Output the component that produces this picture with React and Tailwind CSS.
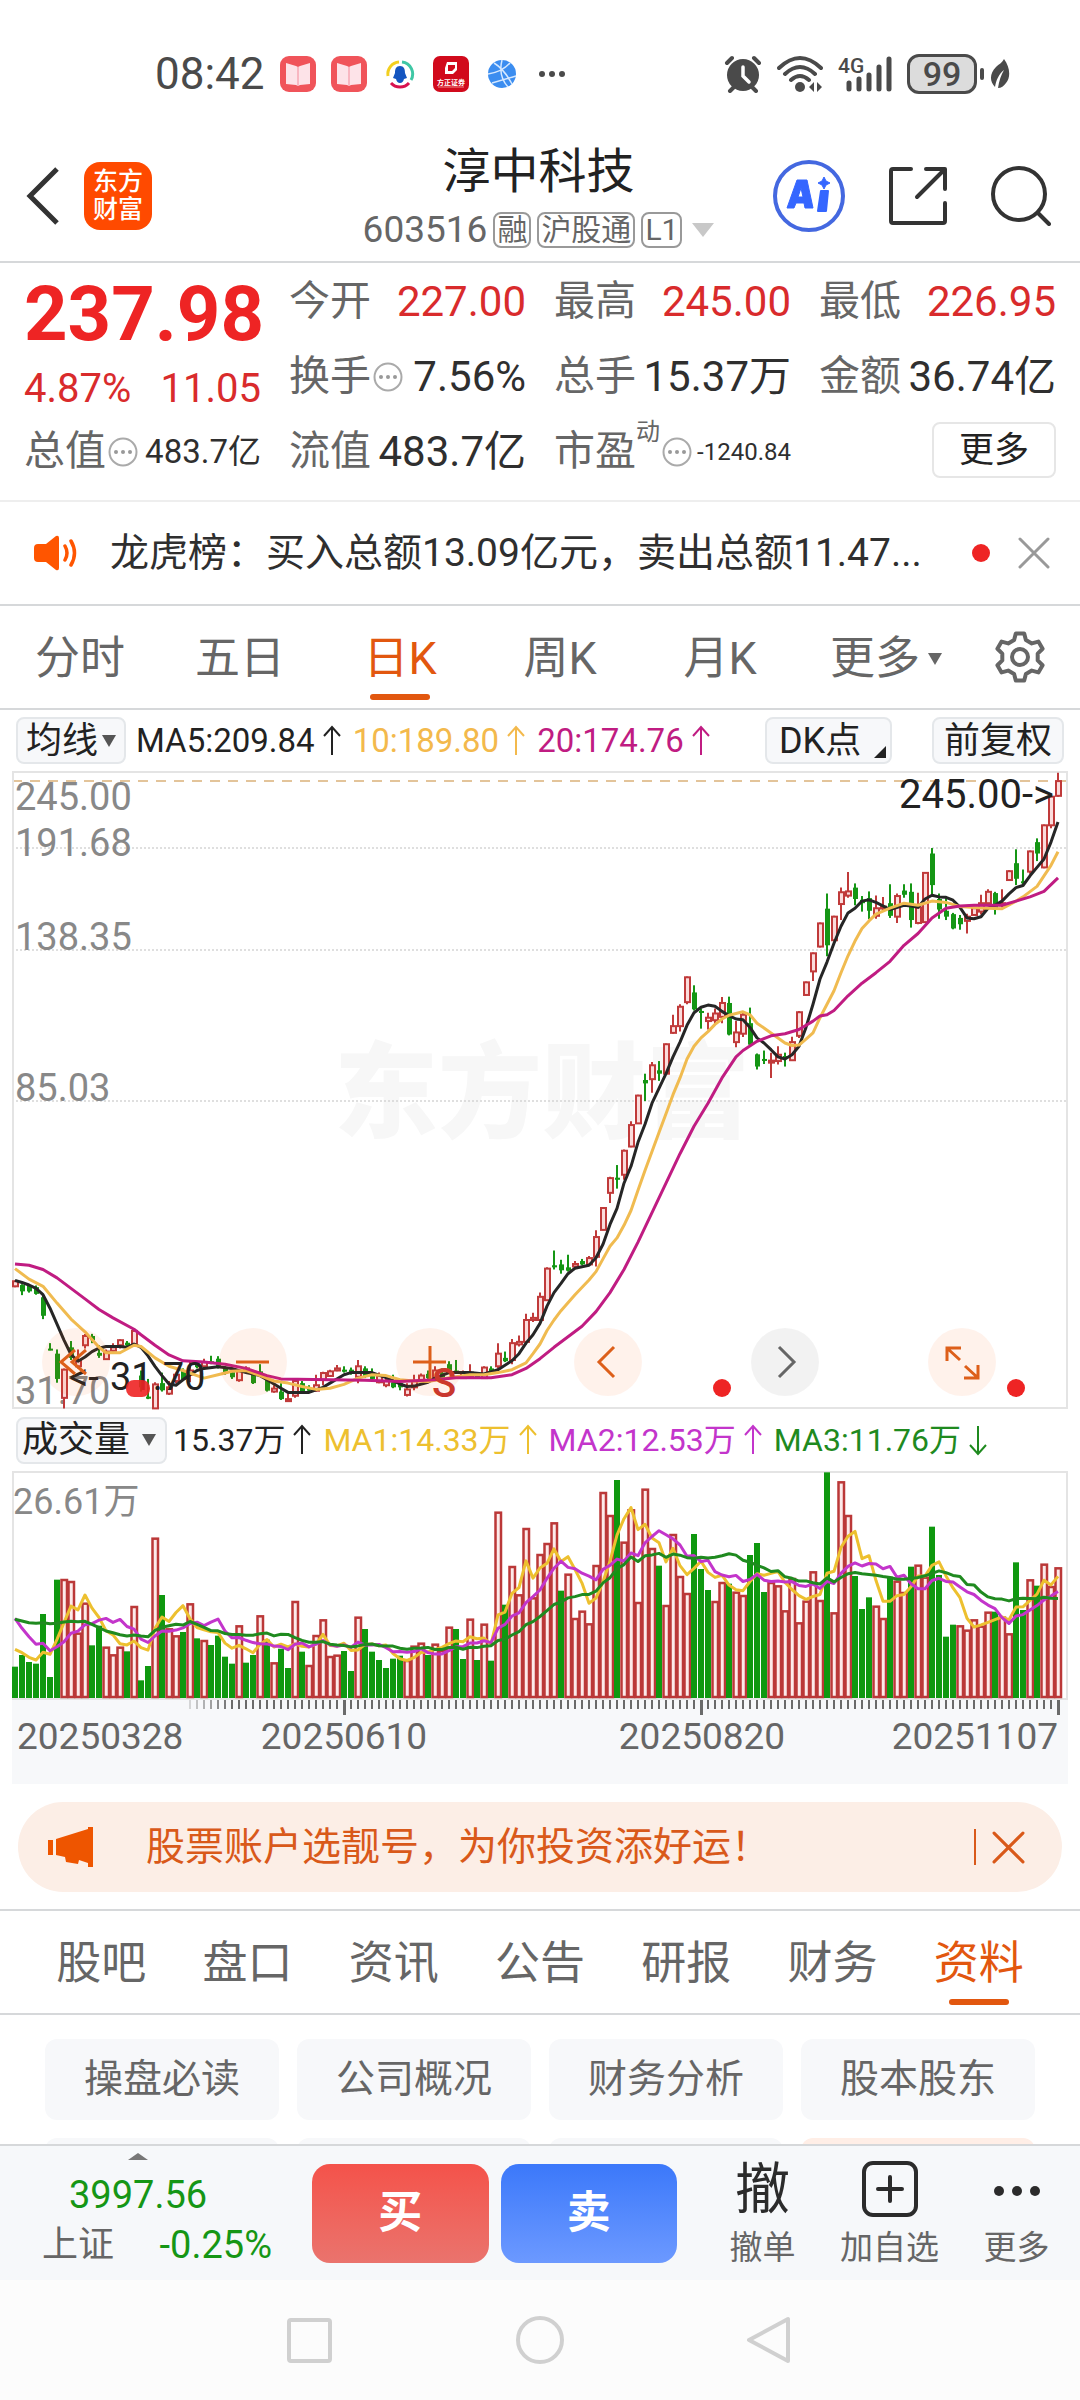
import { useState } from 'react'

const FONT = "font-['Roboto','Noto_Sans_CJK_SC',sans-serif]"

// One entry per trading day: top edge of the bar, negative = falling day
const VOLUME = [
  -620, -585, -606, -611, -462, -651, -359, 357, 363, 518, 428, -556, -497, 560, 583,
  560, -574, 438, -661, -618, 233, -405, 505, 526, -516, 430, -535, 540, -555, -527,
  -590, -611, 496, -608, -585, 466, -539, 607, -566, -624, 423, -575, 615, 525, 478,
  588, 584, -573, -633, 470, -507, -575, -600, -624, -596, -587, 600, 557, 548, -585,
  551, 570, 500, -507, -597, 476, -600, 491, -602, 155, -434, 318, 403, 204, 412,
  282, 249, 187, -392, 341, 474, 452, 490, 315, 96, 165, -60, 245, 148, 426,
  86, 264, -317, 435, 222, 348, 399, -222, -327, -390, 423, 366, -371, 395, 405,
  -285, -249, -396, 366, 376, 451, 354, 487, 422, 334, 420, -37, 457, 64, 165,
  -348, -447, -412, 437, 474, -350, 362, 396, -320, 314, 350, -200, -345, -530, -494,
  496, 509, 478, 497, 455, -455, 470, 520, -307, -450, 358, -377, 311, 378, 322,
]

// high, body top, body bottom, low; negative high = falling day
const CANDLES = [
  [1236, 1238, 1250, 1252], [-1245, 1247, 1262, 1271], [-1245, 1248, 1262, 1265], [-1248, 1252, 1268, 1270], [-1270, 1276, 1320, 1328],
  [-1385, 1398, 1402, 1402], [-1400, 1410, 1470, 1479], [1445, 1448, 1515, 1540], [-1380, 1395, 1420, 1425], [1400, 1425, 1440, 1445],
  [1363, 1368, 1390, 1398], [-1363, 1368, 1378, 1385], [-1390, 1408, 1415, 1420], [1400, 1405, 1423, 1425], [1385, 1395, 1403, 1405],
  [1376, 1378, 1390, 1398], [-1380, 1384, 1390, 1393], [1350, 1356, 1388, 1390], [-1450, 1462, 1490, 1500], [-1470, 1512, 1517, 1518],
  [1478, 1483, 1540, 1540], [-1455, 1480, 1497, 1500], [1475, 1490, 1505, 1508], [1455, 1460, 1475, 1480], [-1445, 1450, 1472, 1475],
  [1430, 1450, 1460, 1478], [-1430, 1434, 1442, 1445], [1422, 1430, 1440, 1445], [-1415, 1428, 1432, 1435], [-1416, 1422, 1440, 1445],
  [-1440, 1444, 1456, 1460], [-1450, 1454, 1466, 1470], [1450, 1452, 1473, 1477], [1440, 1445, 1452, 1455], [-1450, 1458, 1480, 1482],
  [-1435, 1452, 1458, 1462], [-1465, 1472, 1498, 1500], [1485, 1493, 1500, 1503], [-1480, 1500, 1518, 1520], [1505, 1518, 1522, 1525],
  [1470, 1475, 1510, 1515], [-1475, 1480, 1500, 1502], [-1485, 1492, 1498, 1500], [1460, 1485, 1498, 1500], [1453, 1456, 1472, 1485],
  [1448, 1452, 1463, 1465], [1437, 1445, 1450, 1452], [-1440, 1448, 1453, 1455], [-1443, 1448, 1458, 1460], [1425, 1440, 1465, 1480],
  [-1440, 1445, 1465, 1468], [-1445, 1455, 1470, 1472], [1455, 1462, 1478, 1480], [1465, 1475, 1485, 1490], [-1460, 1478, 1490, 1492],
  [-1475, 1480, 1490, 1497], [1480, 1495, 1508, 1512], [1460, 1475, 1490, 1497], [1457, 1462, 1473, 1475], [-1450, 1458, 1468, 1470],
  [1440, 1450, 1468, 1470], [-1445, 1455, 1468, 1470], [-1428, 1435, 1452, 1455], [-1425, 1450, 1453, 1455], [1450, 1455, 1468, 1470],
  [1435, 1455, 1463, 1465], [-1455, 1460, 1468, 1470], [1440, 1443, 1468, 1470], [-1440, 1445, 1456, 1458], [1385, 1410, 1440, 1445],
  [-1405, 1420, 1428, 1430], [1375, 1385, 1425, 1435], [1367, 1382, 1388, 1393], [1315, 1330, 1382, 1388], [1313, 1325, 1330, 1335],
  [1265, 1275, 1330, 1332], [1205, 1208, 1283, 1284], [-1165, 1200, 1205, 1210], [-1187, 1198, 1212, 1220], [-1175, 1205, 1213, 1215],
  [1190, 1197, 1203, 1205], [-1185, 1190, 1198, 1200], [1178, 1183, 1198, 1200], [1117, 1133, 1180, 1203], [1062, 1064, 1116, 1117],
  [990, 993, 1028, 1052], [-962, 992, 997, 1018], [925, 928, 985, 997], [858, 867, 918, 920], [795, 797, 863, 864],
  [-745, 760, 768, 810], [717, 725, 758, 790], [-715, 737, 745, 762], [673, 675, 745, 746], [605, 632, 648, 650],
  [580, 586, 632, 645], [514, 516, 575, 580], [-535, 552, 592, 595], [-590, 596, 600, 638], [600, 612, 620, 640],
  [590, 602, 618, 628], [563, 577, 610, 625], [-562, 577, 652, 654], [620, 647, 670, 682], [600, 605, 650, 658],
  [-588, 625, 676, 678], [-697, 699, 728, 735], [-690, 710, 714, 722], [695, 714, 718, 755], [680, 700, 715, 723],
  [-695, 703, 708, 728], [657, 670, 713, 715], [596, 599, 655, 660], [526, 528, 558, 559], [457, 459, 502, 525],
  [386, 388, 443, 445], [-317, 353, 440, 466], [370, 372, 428, 430], [303, 314, 342, 380], [266, 312, 322, 327],
  [-293, 303, 330, 345], [-323, 332, 340, 360], [-312, 328, 358, 378], [322, 352, 370, 377], [325, 348, 352, 358],
  [-295, 340, 370, 375], [317, 323, 372, 387], [-295, 310, 320, 327], [-293, 313, 380, 398], [315, 350, 387, 390],
  [266, 268, 385, 387], [-209, 222, 297, 325], [-317, 330, 355, 377], [-325, 358, 372, 380], [-363, 366, 400, 402],
  [-368, 375, 390, 403], [365, 372, 382, 412], [345, 352, 368, 370], [320, 340, 360, 367], [307, 313, 340, 345],
  [-313, 316, 355, 367], [307, 340, 345, 350], [262, 264, 285, 286], [-212, 245, 282, 297], [-260, 288, 292, 297],
  [215, 217, 265, 270], [-186, 195, 222, 240], [153, 155, 255, 257], [85, 87, 155, 162], [30, 50, 85, 87],
]

// [day, value] pairs
const MA5 = [
  [0, 1236], [1, 1241], [2, 1247], [3, 1255], [4, 1270], [5, 1302], [6, 1340], [7, 1378], [8, 1412], [9, 1428], [10, 1418], [11, 1405],
  [12, 1397], [13, 1393], [15, 1393], [16, 1395], [17, 1387], [18, 1395], [19, 1415], [20, 1440], [21, 1462], [22, 1482], [23, 1485],
  [24, 1472], [25, 1460], [26, 1450], [27, 1445], [29, 1441], [31, 1445], [33, 1455], [35, 1462], [36, 1472], [38, 1492], [39, 1502],
  [42, 1502], [44, 1490], [45, 1480], [47, 1460], [48, 1455], [51, 1455], [53, 1467], [55, 1482], [56, 1488], [57, 1487], [59, 1478],
  [60, 1468], [62, 1455], [65, 1455], [67, 1458], [69, 1448], [71, 1427], [72, 1410], [73, 1385], [74, 1365], [75, 1338], [76, 1297],
  [77, 1265], [78, 1243], [79, 1220], [80, 1207], [82, 1200], [83, 1182], [84, 1150], [85, 1103], [86, 1065], [87, 1005], [88, 965],
  [89, 908], [90, 865], [91, 815], [92, 780], [93, 745], [94, 705], [95, 670], [96, 630], [97, 600], [98, 587], [99, 582], [100, 585],
  [101, 597], [102, 607], [103, 615], [104, 617], [105, 635], [106, 660], [107, 672], [108, 688], [109, 705], [110, 710], [111, 700],
  [112, 680], [113, 635], [114, 580], [115, 520], [116, 480], [117, 435], [118, 395], [119, 363], [120, 352], [121, 335], [122, 332],
  [123, 338], [125, 355], [127, 345], [128, 347], [129, 350], [130, 330], [131, 321], [132, 325], [133, 326], [134, 333], [135, 350],
  [136, 375], [137, 377], [138, 372], [139, 352], [140, 345], [141, 335], [142, 318], [143, 303], [144, 298], [145, 275], [146, 255],
  [147, 235], [148, 195], [149, 147],
]
const MA10 = [
  [0, 1208], [2, 1233], [4, 1250], [6, 1290], [8, 1328], [10, 1358], [12, 1395], [13, 1408], [15, 1408], [17, 1390], [18, 1393],
  [20, 1420], [22, 1440], [24, 1450], [26, 1462], [27, 1468], [29, 1460], [31, 1452], [33, 1450], [35, 1462], [37, 1475], [39, 1480],
  [41, 1488], [43, 1495], [45, 1492], [47, 1483], [49, 1468], [51, 1460], [53, 1462], [55, 1472], [57, 1475], [59, 1476], [61, 1470],
  [63, 1465], [65, 1460], [67, 1460], [69, 1455], [71, 1448], [73, 1432], [74, 1410], [75, 1387], [76, 1355], [77, 1330], [78, 1308],
  [80, 1270], [82, 1235], [83, 1215], [84, 1185], [85, 1155], [86, 1135], [87, 1105], [88, 1070], [89, 1022], [90, 975], [91, 930],
  [92, 885], [93, 840], [94, 795], [95, 755], [96, 710], [97, 680], [98, 660], [99, 645], [100, 628], [101, 615], [102, 606],
  [104, 598], [105, 605], [106, 625], [108, 648], [110, 672], [111, 678], [112, 677], [113, 663], [114, 648], [115, 612], [116, 580],
  [117, 548], [118, 505], [119, 465], [120, 430], [121, 400], [122, 382], [123, 366], [125, 352], [127, 340], [129, 345], [131, 335],
  [133, 338], [135, 348], [137, 350], [139, 352], [141, 353], [143, 335], [144, 325], [146, 300], [147, 275], [148, 250], [149, 218],
]
const MA20 = [
  [0, 1197], [2, 1200], [4, 1210], [6, 1230], [8, 1255], [10, 1280], [12, 1305], [14, 1325], [17, 1352], [18, 1365], [20, 1390],
  [22, 1413], [24, 1427], [27, 1430], [30, 1435], [33, 1445], [36, 1462], [38, 1470], [45, 1472], [50, 1473], [55, 1476], [60, 1472],
  [63, 1467], [68, 1467], [71, 1460], [73, 1445], [75, 1422], [77, 1395], [79, 1370], [81, 1345], [83, 1310], [85, 1265], [87, 1210],
  [89, 1145], [91, 1075], [93, 1005], [95, 935], [97, 870], [99, 815], [101, 755], [103, 705], [104, 690], [106, 668], [108, 655],
  [110, 650], [112, 640], [114, 620], [115, 608], [116, 605], [117, 595], [119, 560], [121, 530], [123, 505], [125, 478], [127, 440],
  [129, 412], [131, 375], [133, 352], [135, 347], [137, 345], [141, 345], [143, 335], [145, 325], [147, 312], [149, 280],
]

const dayX = i => 3 + i * 7
const priceY = v => (v - 26) * 0.421
const volY = v => (v - 36) / 3 + 1

const toPoints = (pairs, y) => pairs.map(([i, v]) => `${dayX(i)},${y(v).toFixed(1)}`).join(' ')

// Moving average of the volume; seed holds the days before the window is full
function average(size, seed) {
  return VOLUME.map((_, i) => {
    if (i < seed.length) return [i, seed[i]]
    const win = VOLUME.slice(i - size + 1, i + 1)
    return [i, win.reduce((sum, v) => sum + Math.abs(v), 0) / size]
  })
}

const VOL_MA = [
  { color: '#edc02f', data: average(5, [568, 578, 592, 600]) },
  { color: '#c335cb', data: average(10, [475, 505, 530, 553, 550, 572, 560, 545, 520]) },
  { color: '#1f8a1f', data: average(20, [478, 483, 488, 490, 488, 491, 490, 486, 484, 485, 484, 493, 503, 513, 518, 524, 528, 525, 528]) },
]

function Caret({ className = '', up = false }) {
  return (
    <svg viewBox="0 0 14 12" preserveAspectRatio="none" className={`inline-block shrink-0 ${className}`} fill="currentColor" aria-hidden="true">
      <path d={up ? 'M0 12h14L7 0z' : 'M0 0h14L7 12z'} />
    </svg>
  )
}

function Arrow({ down = false }) {
  return (
    <svg width="18" height="32" viewBox="0 0 18 32" fill="none" stroke="currentColor" strokeWidth="2" className="ml-2 shrink-0" aria-hidden="true">
      <path d={down ? 'M9 2v28M1 21l8 9 8-9' : 'M9 30V2M1 11l8-9 8 9'} />
    </svg>
  )
}

function Close({ className = '' }) {
  return (
    <svg viewBox="0 0 32 32" className={className} fill="none" stroke="currentColor" strokeWidth="3" strokeLinecap="round" aria-hidden="true">
      <path d="M2 2l28 28M30 2L2 30" />
    </svg>
  )
}

function Hint() {
  return (
    <svg width="30" height="30" viewBox="0 0 30 30" className="mx-[2px] shrink-0" aria-hidden="true">
      <circle cx="15" cy="15" r="13.5" fill="none" stroke="#aaa" strokeWidth="2" />
      <g fill="#999">
        <circle cx="8" cy="15" r="2" />
        <circle cx="15" cy="15" r="2" />
        <circle cx="22" cy="15" r="2" />
      </g>
    </svg>
  )
}

function BookIcon() {
  return (
    <svg width="36" height="36" viewBox="0 0 36 36">
      <rect width="36" height="36" rx="9" fill="#f0545a" />
      <path d="M6 7l10 3q2 1 2 1q0 0 2-1l10-3v21l-10 1-2 1-2-1-10-1z" fill="#fde3e8" />
      <path d="M18 11v19" stroke="#f6a9b4" strokeWidth="1.5" />
    </svg>
  )
}

function StatusBar() {
  return (
    <div className="flex h-[130px] shrink-0 items-center justify-between pt-[18px] pr-[70px] pl-[155px] text-[#4a4a4a]">
      <div className="flex items-center gap-[15px]">
        <span className="text-[44px] leading-none">08:42</span>
        <BookIcon />
        <BookIcon />
        <svg width="36" height="36" viewBox="0 0 36 36" fill="none" strokeWidth="3">
          <path d="M6 20A12 12 0 0 1 17 6" stroke="#f2cf1f" />
          <path d="M20 6a12 12 0 0 1 9 18" stroke="#3fc7a5" />
          <path d="M9 27a12 12 0 0 0 18 0" stroke="#d8124f" />
          <path d="M18 10c-4 0-5 3-5 7l-2 5 3 1q1 4 4 4t4-4l3-1-2-5c0-4-1-7-5-7z" fill="#1455c0" />
        </svg>
        <svg width="36" height="36" viewBox="0 0 36 36">
          <rect width="36" height="36" rx="7" fill="#d10a1c" />
          <path d="M14 6h10v8l-4 4h-8v-6zM15 9v6h4l3-3V9z" fill="#fff" fillRule="evenodd" />
          <text x="18" y="29" fontSize="7" fontWeight="700" fill="#fff" textAnchor="middle">方正证券</text>
          <path d="M5 31h26" stroke="#e88" strokeWidth="1" />
        </svg>
        <svg width="36" height="36" viewBox="0 0 36 36">
          <circle cx="18" cy="18" r="14" fill="#3b8df0" />
          <path d="M4 18q14-2 22-11M18 4q-4 16 6 27M8 27q10-3 24-7M10 7q10 6 18 21" stroke="#d5e8ff" strokeWidth="1.5" fill="none" />
        </svg>
        <svg width="30" height="10" viewBox="0 0 30 10" className="ml-1" fill="currentColor">
          <circle cx="3" cy="5" r="3" />
          <circle cx="13" cy="5" r="3" />
          <circle cx="23" cy="5" r="3" />
        </svg>
      </div>

      <div className="flex items-center">
        <svg width="38" height="38" viewBox="0 0 38 38" fill="none" stroke="currentColor" strokeWidth="4" strokeLinecap="round">
          <circle cx="19" cy="20" r="16" fill="currentColor" stroke="none" />
          <path d="M3 8l5-5M35 8l-5-5M6 36l5-5M32 36l-5-5" />
          <path d="M19 12v9l6 6" stroke="#fff" strokeWidth="3.5" />
        </svg>
        <svg width="46" height="38" viewBox="0 0 46 38" className="ml-[15px]" fill="none" stroke="currentColor" strokeWidth="4" strokeLinecap="round">
          <path d="M2 13q21-20 42 0M8 19q15-14 30 0M14 25q9-8 18 0" />
          <circle cx="23" cy="32" r="5" fill="currentColor" stroke="none" />
          <path d="M37 27v10l-5-5zM40 27v10l5-5z" fill="currentColor" stroke="none" />
        </svg>
        <svg width="54" height="38" viewBox="0 0 54 38" className="ml-[15px]" stroke="currentColor" strokeWidth="5" strokeLinecap="round">
          <text x="0" y="18" fontSize="21" fontWeight="500" fill="currentColor" stroke="none">4G</text>
          <path d="M11 28v6M21 24v10M31 20v14M41 12v22M51 4v30" />
        </svg>
        <span className="ml-[15px] flex h-10 w-[70px] items-center justify-center rounded-xl border-[3px] border-[#4a4a4a] bg-[#dcdcdc] text-[34px] leading-none font-medium">99</span>
        <span className="ml-[3px] h-3 w-1 rounded-full bg-[#4a4a4a]" />
        <svg width="20" height="32" viewBox="0 0 20 32" className="ml-[6px]">
          <path d="M14 1c6 8 7 18 2 24-2 3-5 5-8 5 1-7 3-13 6-18-5 4-8 10-9 17C-1 23 0 15 6 9c3-3 6-4 8-8z" fill="currentColor" />
        </svg>
      </div>
    </div>
  )
}

function Header() {
  return (
    <header className="grid h-[133px] shrink-0 grid-cols-[1fr_auto_1fr] items-center border-b-2 border-[#d6d8da] pr-[29px] pl-[26px]">
      <div className="flex items-center gap-6">
        <button type="button" aria-label="返回">
          <svg width="34" height="58" viewBox="0 0 34 58" fill="none" stroke="#333" strokeWidth="5">
            <path d="M31 2L4 29l27 27" />
          </svg>
        </button>
        <div className="flex h-[68px] w-[68px] flex-col items-center justify-center rounded-2xl bg-[#ff4a00] text-[25px] leading-[28px] font-medium text-white">
          <span>东方</span>
          <span>财富</span>
        </div>
      </div>

      <div className="flex flex-col items-center gap-3 pt-1">
        <h1 className="text-[48px] leading-[52px] text-[#222]">淳中科技</h1>
        <div className="flex h-10 items-center gap-[6px] text-[#666]">
          <span className="text-[37px] leading-none">603516</span>
          {['融', '沪股通', 'L1'].map(tag => (
            <span key={tag} className="flex h-9 items-center rounded-lg border-2 border-[#999] px-[2px] text-[30px] leading-none">{tag}</span>
          ))}
          <Caret className="ml-1 h-[14px] w-[22px] text-[#c8c8c8]" />
        </div>
      </div>

      <div className="flex items-center justify-end gap-11">
        <button type="button" aria-label="Ai">
          <svg width="72" height="72" viewBox="0 0 72 72">
            <circle cx="36" cy="36" r="34" fill="none" stroke="#4468e0" strokeWidth="4" />
            <g fill="#3566ff" stroke="#3566ff" strokeWidth="2" strokeLinejoin="round">
              <path d="M24 20h10l6 28h-8l-1-5h-8l-2 5h-7zM28 28l-3 9h5z" fillRule="evenodd" strokeWidth="1" />
              <path d="M48 31h7l-2 20h-8z" />
              <path d="M51 17l2 4 4 2-4 2-2 4-2-4-4-2 4-2z" strokeWidth="1" />
            </g>
          </svg>
        </button>
        <button type="button" aria-label="分享">
          <svg width="58" height="58" viewBox="0 0 58 58" fill="none" stroke="#333" strokeWidth="4" strokeLinecap="round" strokeLinejoin="round">
            <path d="M22 2H4q-2 0-2 2v50q0 2 2 2h50q2 0 2-2V36" />
            <path d="M37 2h19v20M55 3L28 30" />
          </svg>
        </button>
        <button type="button" aria-label="搜索">
          <svg width="60" height="60" viewBox="0 0 60 60" fill="none" stroke="#333" strokeWidth="4" strokeLinecap="round">
            <circle cx="28" cy="28" r="26" />
            <path d="M47 47l11 11" />
          </svg>
        </button>
      </div>
    </header>
  )
}

function Stat({ label, hint, sup, value, className = 'text-[42px] text-[#2f2f2f]' }) {
  return (
    <div className="flex h-[75px] items-center justify-between whitespace-nowrap">
      <span className="flex items-center text-[41px] text-[#666]">
        {label}
        {sup && <sup className="-top-5 text-[24px] leading-none">{sup}</sup>}
        {hint && <Hint />}
      </span>
      <span className={className}>{value}</span>
    </div>
  )
}

function Quote() {
  const red = 'text-[42px] text-[#d92b2c]'
  return (
    <section className="grid shrink-0 grid-cols-4 gap-x-7 border-b-2 border-[#eee] px-6 pt-[1px] pb-[11px]">
      <div className="row-span-2 flex flex-col whitespace-nowrap">
        <span className="text-[76px] leading-[100px] font-bold text-[#ee2424]">237.98</span>
        <div className="flex justify-between text-[40px] leading-[50px] text-[#d92b2c]">
          <span>4.87%</span>
          <span>11.05</span>
        </div>
      </div>
      <Stat label="今开" value="227.00" className={red} />
      <Stat label="最高" value="245.00" className={red} />
      <Stat label="最低" value="226.95" className={red} />
      <Stat label="换手" hint value="7.56%" />
      <Stat label="总手" value="15.37万" />
      <Stat label="金额" value="36.74亿" />
      <Stat label="总值" hint value="483.7亿" className="text-[33px] text-[#2f2f2f]" />
      <Stat label="流值" value="483.7亿" />
      <Stat label="市盈" hint sup="动" value="-1240.84" className="text-[24px] text-[#2f2f2f]" />
      <div className="flex h-[72px] items-center justify-end">
        <button type="button" className="h-14 w-[124px] rounded-lg border-2 border-[#e6e6e6] text-[35px] leading-none text-[#222]">更多</button>
      </div>
    </section>
  )
}

function NewsBar() {
  return (
    <div className="flex h-[104px] shrink-0 items-center border-b-2 border-[#d6d8da] pr-[30px] pl-[34px]">
      <svg width="46" height="38" viewBox="0 0 46 38" className="shrink-0" fill="none" stroke="#ff5500" strokeWidth="3.5" strokeLinecap="round">
        <path d="M4 10h8L22 2q3-1 3 2v30q0 3-3 2l-10-8H4q-4 0-4-4V14q0-4 4-4z" fill="#ff5500" stroke="none" />
        <path d="M31 12q4 7 0 14M37 7q7 12 0 24" />
      </svg>
      <p className="ml-[30px] flex-1 truncate text-[39px] text-[#2f2f2f]">龙虎榜：买入总额13.09亿元，卖出总额11.47...</p>
      <span className="h-[18px] w-[18px] rounded-full bg-[#ee2424]" />
      <button type="button" aria-label="关闭" className="ml-7 text-[#999]">
        <Close className="h-8 w-8" />
      </button>
    </div>
  )
}

function Gear() {
  const points = []
  for (let k = 0; k < 6; k++) {
    for (const [offset, r] of [[-19, 18], [-10, 24], [10, 24], [19, 18]]) {
      const a = ((k * 60 - 90 + offset) * Math.PI) / 180
      points.push(`${(26 + r * Math.cos(a)).toFixed(1)},${(26 + r * Math.sin(a)).toFixed(1)}`)
    }
  }
  return (
    <svg width="52" height="52" viewBox="0 0 52 52" fill="none" stroke="#666" strokeWidth="4" strokeLinejoin="round">
      <polygon points={points.join(' ')} />
      <circle cx="26" cy="26" r="8" />
    </svg>
  )
}

function Tab({ active, onClick, children }) {
  return (
    <button
      type="button"
      onClick={onClick}
      className={`relative flex h-full flex-1 items-center justify-center pt-1 text-[45px] ${active ? 'text-[#e2570f]' : 'text-[#666]'}`}
    >
      {children}
      {active && <span className="absolute bottom-2 left-1/2 h-[6px] w-[60px] -translate-x-1/2 rounded-full bg-[#e2570f]" />}
    </button>
  )
}

function PeriodTabs() {
  const [period, setPeriod] = useState('日K')
  return (
    <nav className="flex h-[104px] shrink-0 items-center border-b-2 border-[#d6d8da]">
      {['分时', '五日', '日K', '周K', '月K'].map(p => (
        <Tab key={p} active={p === period} onClick={() => setPeriod(p)}>{p}</Tab>
      ))}
      <button type="button" className="flex h-full flex-1 items-center justify-center pt-1 text-[45px] text-[#666]">
        <span className="ml-3">更多</span>
        <Caret className="ml-2 h-3 w-[14px]" />
      </button>
      <button type="button" aria-label="设置" className="flex w-[120px] justify-center">
        <Gear />
      </button>
    </nav>
  )
}

function Pill({ className = '', children }) {
  return (
    <button type="button" className={`relative flex h-[47px] shrink-0 items-center rounded-lg border-2 border-[#e4e7ea] bg-[#f7f8fa] text-[36px] leading-none text-[#222] ${className}`}>
      {children}
    </button>
  )
}

function PriceLegend() {
  return (
    <div className="flex h-[61px] shrink-0 items-center px-4 text-[33px] whitespace-nowrap">
      <Pill className="gap-1 px-2">
        均线
        <Caret className="h-3 w-[14px] text-[#555]" />
      </Pill>
      <span className="ml-[10px] flex items-center text-[#222]">MA5:209.84<Arrow /></span>
      <span className="ml-3 flex items-center text-[#f3b94c]">10:189.80<Arrow /></span>
      <span className="ml-3 flex items-center text-[#c01c82]">20:174.76<Arrow /></span>
      <Pill className="ml-auto w-[127px] pl-3">
        DK点
        <svg width="12" height="12" viewBox="0 0 12 12" className="absolute right-1 bottom-1">
          <path d="M12 0v12H0z" fill="#222" />
        </svg>
      </Pill>
      <Pill className="ml-10 px-[10px]">前复权</Pill>
    </div>
  )
}

const TOOLS = [
  { label: '最早', d: 'M33 22L19 34l14 12M44 22L30 34l14 12' },
  { label: '缩小', d: 'M17 34h33' },
  { label: '放大', d: 'M17 34h33M34 18v33' },
  { label: '左移', d: 'M40 19L25 34l15 15' },
  { label: '右移', d: 'M28 19l15 15-15 15', off: true },
  { label: '全屏', d: 'M33 20H19v13M20 21l12 11M36 50h14V37M49 49L37 38' },
]

function PriceChart() {
  return (
    <div className="relative mx-3 shrink-0">
      <svg viewBox="0 0 1056 638" className="block w-full overflow-visible" role="img" aria-label="日K线">
        <text x="322" y="359" fontSize="104" fontWeight="900" fill="#f7f7f7">东方财富</text>
        <g stroke="#d5d5d5" strokeWidth="1.5" strokeDasharray="2 2">
          <path d="M0 77h1056M0 179h1056M0 330h1056" />
        </g>
        <path d="M0 10h1056" stroke="#e3c49a" strokeWidth="2" strokeDasharray="10 8" />
        <rect x="1" y="1" width="1054" height="636" fill="none" stroke="#e4e4e4" strokeWidth="2" />

        <g fontSize="38" fill="#888">
          <text x="3" y="39">245.00</text>
          <text x="3" y="85">191.68</text>
          <text x="3" y="179">138.35</text>
          <text x="3" y="330">85.03</text>
          <text x="3" y="633">31.70</text>
        </g>

        {CANDLES.map(([high, top, bottom, low], i) => {
          const x = dayX(i)
          const h = Math.max(priceY(bottom) - priceY(top), 2)
          return high < 0 ? (
            <g key={i} fill="#159615">
              <rect x={x - 1} y={priceY(-high)} width="2" height={priceY(low) - priceY(-high)} />
              <rect x={x - 2} y={priceY(top)} width="5" height={h} />
            </g>
          ) : (
            <g key={i} stroke="#c03a3a" strokeWidth="2">
              <path d={`M${x} ${priceY(high)}V${priceY(low)}`} />
              <rect x={x - 2} y={priceY(top)} width="5" height={h} fill="#fbdcdc" />
            </g>
          )
        })}

        <g fill="none" strokeWidth="3" strokeLinejoin="round">
          <polyline points={toPoints(MA5, priceY)} stroke="#262626" />
          <polyline points={toPoints(MA10, priceY)} stroke="#f0bb50" />
          <polyline points={toPoints(MA20, priceY)} stroke="#c01c82" />
        </g>

        <g fill="#222">
          <text x="1042" y="37" fontSize="40" textAnchor="end">245.00-&gt;</text>
          <text x="57" y="619" fontSize="38">&lt;-</text>
          <text x="98" y="619" fontSize="38">31.70</text>
        </g>
        <g fill="#ee2424">
          <rect x="114" y="609" width="24" height="17" rx="8" fillOpacity="0.9" />
          <circle cx="710" cy="617" r="9" />
          <circle cx="1004" cy="617" r="9" />
        </g>
        <text x="420" y="626" fontSize="40" fontWeight="500" fill="#c8372f">S</text>
      </svg>

      <div className="absolute inset-x-0 bottom-[13px] flex justify-between pr-[72px] pl-[30px]">
        {TOOLS.map(tool => (
          <button
            key={tool.label}
            type="button"
            aria-label={tool.label}
            className={`rounded-full ${tool.off ? 'bg-black/5 text-[#666]' : 'bg-[#ff5500]/8 text-[#dd5f1a]'}`}
          >
            <svg width="68" height="68" viewBox="0 0 68 68" fill="none" stroke="currentColor" strokeWidth="3">
              <path d={tool.d} />
            </svg>
          </button>
        ))}
      </div>
    </div>
  )
}

function VolumeLegend() {
  return (
    <div className="flex h-[62px] shrink-0 items-center pl-4 text-[32px] whitespace-nowrap">
      <Pill className="w-[151px] gap-3 pl-1">
        成交量
        <Caret className="h-3 w-[14px] text-[#555]" />
      </Pill>
      <span className="ml-[6px] flex items-center text-[#222]">15.37万<Arrow /></span>
      <span className="ml-3 flex items-center text-[#edc02f]">MA1:14.33万<Arrow /></span>
      <span className="ml-3 flex items-center text-[#c335cb]">MA2:12.53万<Arrow /></span>
      <span className="ml-3 flex items-center text-[#1f8a1f]">MA3:11.76万<Arrow down /></span>
    </div>
  )
}

function VolumeChart() {
  return (
    <div className="mx-3 shrink-0">
      <svg viewBox="0 0 1056 229" className="block w-full" role="img" aria-label="成交量">
        <path d="M0 1h1056M1 0v228M1055 0v228M0 228h1056" stroke="#e4e4e4" strokeWidth="2" />
        <text x="1" y="43" fontSize="36" fill="#888">26.61万</text>
        {VOLUME.map((v, i) => {
          const y = volY(Math.abs(v))
          return v < 0 ? (
            <rect key={i} x={dayX(i) - 3} y={y} width="6" height={227 - y} fill="#0f980f" />
          ) : (
            <rect key={i} x={dayX(i) - 2.5} y={y + 1} width="5.5" height={225 - y} fill="#fdeaea" stroke="#bb3838" strokeWidth="2.5" />
          )
        })}
        <g fill="none" strokeWidth="3" strokeLinejoin="round">
          {VOL_MA.map(ma => (
            <polyline key={ma.color} points={toPoints(ma.data, volY)} stroke={ma.color} />
          ))}
        </g>
      </svg>
      <svg viewBox="0 0 1056 84" className="block w-full bg-[#f7f8fa]">
        {VOLUME.map((_, i) => {
          if (i < 25) return null
          const major = i === 47 || i === 98 || i === 149
          return (
            <rect
              key={i}
              x={dayX(i) - 1}
              y="0"
              width={major ? 3 : 2}
              height={major ? 15 : 9}
              fill="#6b6b6b"
              fillOpacity={Math.min(1, (i - 23) / 8)}
            />
          )
        })}
        <g fontSize="37" fill="#666">
          <text x="5" y="49">20250328</text>
          <text x="332" y="49" textAnchor="middle">20250610</text>
          <text x="690" y="49" textAnchor="middle">20250820</text>
          <text x="1046" y="49" textAnchor="end">20251107</text>
        </g>
      </svg>
    </div>
  )
}

function Banner() {
  return (
    <div className="mx-[18px] mt-[18px] mb-[17px] flex h-[90px] shrink-0 items-center rounded-full bg-[#fceee6] pr-[37px] pl-[30px] text-[#d9591a]">
      <svg width="46" height="40" viewBox="0 0 46 40" fill="#ee5500">
        <path d="M0 13h5v15H0zM8 12L40 2V0h5v40h-5v-4l-9-3-1 4-12-2-1-5-9-2z" />
      </svg>
      <p className="ml-[52px] flex-1 text-[39px]">股票账户选靓号，为你投资添好运！</p>
      <span className="h-9 w-[2px] bg-[#d9591a]" />
      <button type="button" aria-label="关闭" className="ml-4">
        <Close className="h-[33px] w-[33px]" />
      </button>
    </div>
  )
}

function InfoTabs() {
  const [tab, setTab] = useState('资料')
  return (
    <nav className="flex h-[106px] shrink-0 items-center border-y-2 border-[#d6d8da] px-7">
      {['股吧', '盘口', '资讯', '公告', '研报', '财务', '资料'].map(t => (
        <Tab key={t} active={t === tab} onClick={() => setTab(t)}>{t}</Tab>
      ))}
    </nav>
  )
}

function Chips() {
  return (
    <div className="min-h-0 flex-1 overflow-hidden px-[45px] pt-6">
      <div className="grid grid-cols-4 gap-[18px]">
        {['操盘必读', '公司概况', '财务分析', '股本股东'].map(c => (
          <button key={c} type="button" className="h-[81px] rounded-xl bg-[#f7f8fa] text-[39px] leading-none text-[#666]">{c}</button>
        ))}
        <span className="h-[81px] rounded-xl bg-[#f7f8fa]" />
        <span className="h-[81px] rounded-xl bg-[#f7f8fa]" />
        <span className="h-[81px] rounded-xl bg-[#f7f8fa]" />
        <span className="h-[81px] rounded-xl bg-[#ffeee6]" />
      </div>
    </div>
  )
}

function Action({ label, children }) {
  return (
    <button type="button" className="flex w-[127px] flex-col items-center pt-[2px] text-[33px] leading-[38px] text-[#666]">
      <span className="mb-3 flex h-14 items-center text-[#2b2b2b]">{children}</span>
      {label}
    </button>
  )
}

function BottomBar() {
  return (
    <footer className="flex h-[136px] shrink-0 items-center border-t-2 border-[#d6d8da] bg-[#f6f8fa]">
      <div className="relative flex w-[312px] shrink-0 flex-col pt-[14px] pr-10 pl-[42px] text-[38px] leading-[50px] text-[#159615]">
        <Caret up className="absolute -top-[3px] left-32 h-[7px] w-5 text-[#777]" />
        <span className="pr-3 pl-[27px]">3997.56</span>
        <div className="flex justify-between">
          <span className="text-[36px] text-[#666]">上证</span>
          <span>-0.25%</span>
        </div>
      </div>
      <div className="flex flex-1 gap-3 text-[44px] font-bold text-white">
        <button type="button" className="h-[99px] flex-1 rounded-[18px] bg-linear-to-b from-[#f4524a] to-[#ea736d]">买</button>
        <button type="button" className="h-[99px] flex-1 rounded-[18px] bg-linear-to-b from-[#3b78fa] to-[#6c99ff]">卖</button>
      </div>
      <div className="ml-[22px] flex shrink-0">
        <Action label="撤单">
          <span className="text-[55px]">撤</span>
        </Action>
        <Action label="加自选">
          <svg width="56" height="56" viewBox="0 0 56 56" fill="none" stroke="currentColor" strokeWidth="4" strokeLinecap="round">
            <rect x="2" y="2" width="52" height="52" rx="9" />
            <path d="M16 28h24M28 16v24" />
          </svg>
        </Action>
        <Action label="更多">
          <svg width="48" height="12" viewBox="0 0 48 12" fill="currentColor" className="mt-1">
            <circle cx="6" cy="6" r="5" />
            <circle cx="24" cy="6" r="5" />
            <circle cx="42" cy="6" r="5" />
          </svg>
        </Action>
      </div>
    </footer>
  )
}

function SystemNav() {
  return (
    <div className="flex h-[120px] shrink-0 items-center justify-center gap-[182px] bg-[#fcfcfc] text-[#d0d0d0]">
      <button type="button" aria-label="最近任务">
        <svg width="48" height="48" viewBox="0 0 48 48" fill="none" stroke="currentColor" strokeWidth="4">
          <rect x="3" y="4" width="41" height="41" rx="2" />
        </svg>
      </button>
      <button type="button" aria-label="主屏幕">
        <svg width="48" height="48" viewBox="0 0 48 48" fill="none" stroke="currentColor" strokeWidth="4">
          <circle cx="24" cy="24" r="22" />
        </svg>
      </button>
      <button type="button" aria-label="后退">
        <svg width="48" height="48" viewBox="0 0 48 48" fill="none" stroke="currentColor" strokeWidth="4" strokeLinejoin="round">
          <path d="M42 3v42L3 24z" />
        </svg>
      </button>
    </div>
  )
}

export default function App() {
  return (
    <div className={`flex h-screen flex-col overflow-hidden bg-white ${FONT}`}>
      <StatusBar />
      <Header />
      <Quote />
      <NewsBar />
      <PeriodTabs />
      <PriceLegend />
      <PriceChart />
      <VolumeLegend />
      <VolumeChart />
      <Banner />
      <InfoTabs />
      <Chips />
      <BottomBar />
      <SystemNav />
    </div>
  )
}
